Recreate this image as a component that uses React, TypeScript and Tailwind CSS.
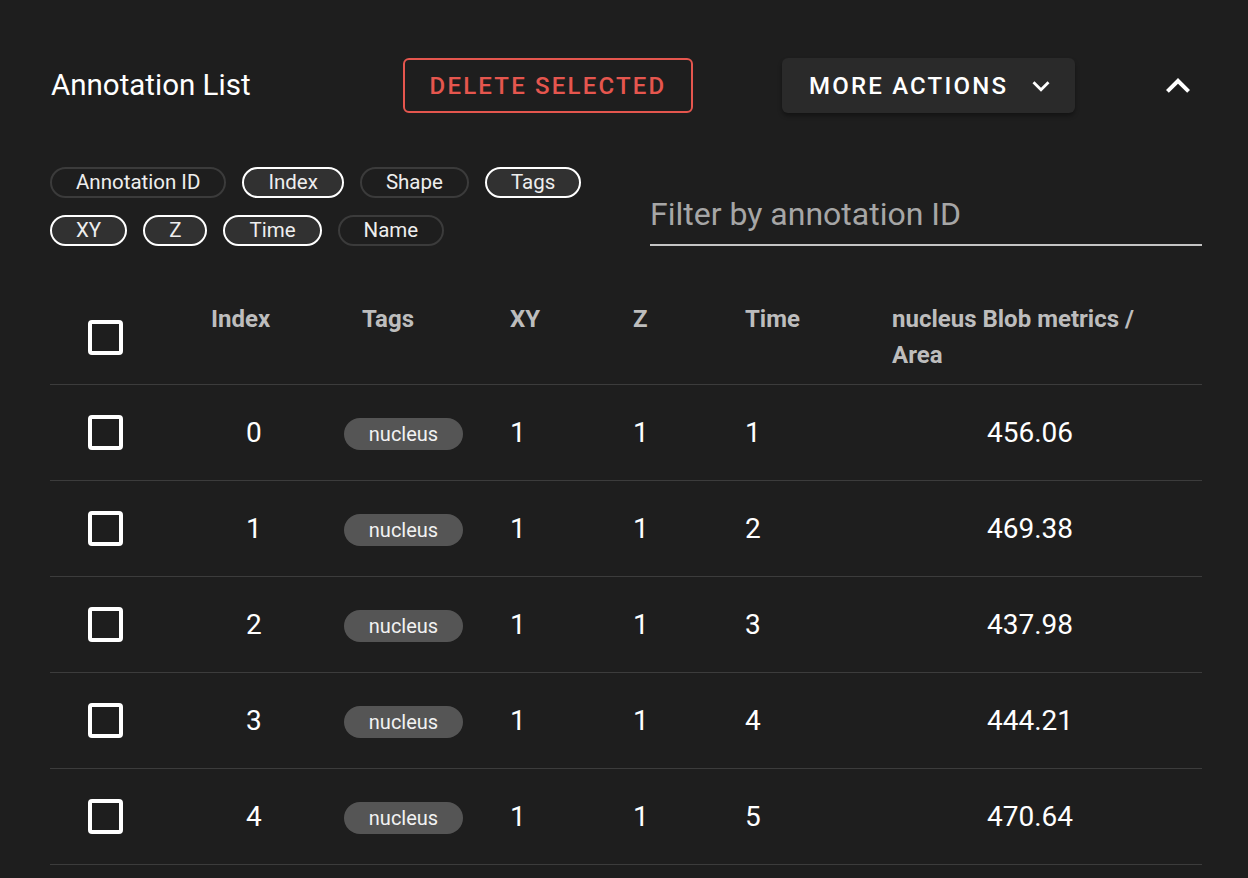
import React from "react";

const font = { fontFamily: "Roboto, 'Liberation Sans', sans-serif" };

function Checkbox() {
  return <div className="w-[35px] h-[35px] border-[4px] border-white rounded-[4px] box-border" />;
}

function ChevronUp() {
  return (
    <svg width="48" height="48" viewBox="0 0 24 24">
      <path fill="#fff" d="M7.41,15.41L12,10.83L16.59,15.41L18,14L12,8L6,14L7.41,15.41Z" />
    </svg>
  );
}
function ChevronDown() {
  return (
    <svg width="34" height="34" viewBox="0 0 24 24">
      <path fill="#fff" d="M7.41,8.58L12,13.17L16.59,8.58L18,10L12,16L6,10L7.41,8.58Z" />
    </svg>
  );
}

const chips1 = [
  { t: "Annotation ID", s: false },
  { t: "Index", s: true },
  { t: "Shape", s: false },
  { t: "Tags", s: true },
];
const chips2 = [
  { t: "XY", s: true },
  { t: "Z", s: true },
  { t: "Time", s: true },
  { t: "Name", s: false },
];

function Chip({ t, s }: { t: string; s: boolean }) {
  return (
    <div
      className={
        "h-[31px] px-[24px] rounded-full border-2 flex items-center text-[20.5px] text-[#eeeeee] leading-none " +
        (s ? "border-white bg-[#313131]" : "border-[#3b3b3b] bg-transparent")
      }
    >
      {t}
    </div>
  );
}

const rows = [
  { i: 0, time: 1, area: "456.06" },
  { i: 1, time: 2, area: "469.38" },
  { i: 2, time: 3, area: "437.98" },
  { i: 3, time: 4, area: "444.21" },
  { i: 4, time: 5, area: "470.64" },
];

const cols = "grid grid-cols-[130px_150px_160px_120px_110px_150px_332px]";

export default function App() {
  return (
    <div className="w-[1248px] h-[878px] bg-[#1e1e1e] overflow-hidden text-white" style={font}>
      <div className="pl-[50px] pr-[46px] pt-[58px]">
        {/* Title row */}
        <div className="flex items-center h-[55px]">
          <div className="w-[353px] text-[29.5px] pl-[1px] leading-none">Annotation List</div>
          <div className="w-[290px] h-[55px] border-2 border-[#e5564e] rounded-[6px] flex items-center justify-center text-[#e5564e] text-[24px] font-medium tracking-[2.2px] leading-none">
            DELETE SELECTED
          </div>
          <div className="w-[89px]" />
          <div className="w-[293px] h-[55px] bg-[#2a2a2a] rounded-[6px] shadow-[0_3px_4px_rgba(0,0,0,0.35)] flex items-center pl-[27px] text-[24px] font-medium tracking-[2.2px] leading-none">
            <span>MORE ACTIONS</span>
            <span className="ml-[16px] flex items-center">
              <ChevronDown />
            </span>
          </div>
          <div className="flex-1 flex justify-end">
            <ChevronUp />
          </div>
        </div>

        {/* Chips + filter */}
        <div className="flex items-end mt-[54px]">
          <div className="w-[560px] flex flex-col gap-[17px]">
            <div className="flex gap-[16px]">
              {chips1.map((c) => (
                <Chip key={c.t} {...c} />
              ))}
            </div>
            <div className="flex gap-[16px]">
              {chips2.map((c) => (
                <Chip key={c.t} {...c} />
              ))}
            </div>
          </div>
          <div className="flex-1 ml-[40px] border-b-2 border-[#c4c4c4] pb-[10px]">
            <div className="text-[32px] leading-[40px] text-[#a6a6a6]">Filter by annotation ID</div>
          </div>
        </div>

        {/* Table */}
        <div className="mt-[44px]">
          <div className={cols + " h-[95px] border-b-[1.5px] border-[#3c3c3c] text-[24px] font-bold text-[#bdbdbd]"}>
            <div className="flex items-center pl-[38px]">
              <Checkbox />
            </div>
            <div className="pl-[31px] pt-[11px] leading-[36px]">Index</div>
            <div className="pl-[32px] pt-[11px] leading-[36px]">Tags</div>
            <div className="pl-[20px] pt-[11px] leading-[36px]">XY</div>
            <div className="pl-[23px] pt-[11px] leading-[36px]">Z</div>
            <div className="pl-[25px] pt-[11px] leading-[36px]">Time</div>
            <div className="pl-[22px] pt-[11px] leading-[36px] w-[290px]">nucleus Blob metrics / Area</div>
          </div>
          {rows.map((r) => (
            <div key={r.i} className={cols + " h-[96px] border-b-[1.5px] border-[#3c3c3c] text-[28px] items-center"}>
              <div className="flex items-center pl-[38px]">
                <Checkbox />
              </div>
              <div className="pl-[66px]">{r.i}</div>
              <div className="pl-[14px] flex items-center pt-[3px]">
                <div className="w-[119px] h-[32px] rounded-full bg-[#555555] flex items-center justify-center text-[20px] leading-none text-[#f2f2f2]">
                  nucleus
                </div>
              </div>
              <div className="pl-[20px]">1</div>
              <div className="pl-[23px]">1</div>
              <div className="pl-[25px]">{r.time}</div>
              <div className="pl-[117px]">{r.area}</div>
            </div>
          ))}
        </div>
      </div>
    </div>
  );
}
